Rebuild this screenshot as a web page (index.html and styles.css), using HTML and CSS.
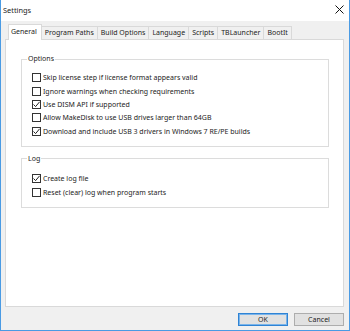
FILE: index.html
```html
<!DOCTYPE html>
<html>
    <head>
        <meta name="viewport" content="width=device-width, initial-scale=1" />
        <title>Settings</title>
        <link rel="stylesheet" href="styles.css">
    </head>
<body>

    <div class="window">
        <div class="title_bar">
            <span class="title_text">Settings</span>
            <svg class="close_icon" width="9" height="9" viewBox="0 0 9 9">
                <path d="M0.5 0.5 L8.5 8.5 M8.5 0.5 L0.5 8.5" stroke="#111" stroke-width="1" fill="none"/>
            </svg>
        </div>

        <div class="window_body">
            <div class="tabs">
                <div class="tab tab--active">General</div>
                <div class="tab">Program Paths</div>
                <div class="tab">Build Options</div>
                <div class="tab">Language</div>
                <div class="tab">Scripts</div>
                <div class="tab">TBLauncher</div>
                <div class="tab">BootIt</div>
            </div>

            <div class="panel">
                <fieldset class="group group--options">
                    <legend class="group_title">Options</legend>
                    <div class="check_row"><span class="check_box"></span>Skip license step if license format appears valid</div>
                    <div class="check_row"><span class="check_box"></span>Ignore warnings when checking requirements</div>
                    <div class="check_row"><span class="check_box is-checked"><svg viewBox="0 0 9 9" width="9" height="9"><path d="M1.5 4.5 L3.6 6.6 L7.6 1.8" stroke="#222" stroke-width="1" fill="none"/></svg></span>Use DISM API if supported</div>
                    <div class="check_row"><span class="check_box"></span>Allow MakeDisk to use USB drives larger than 64GB</div>
                    <div class="check_row"><span class="check_box is-checked"><svg viewBox="0 0 9 9" width="9" height="9"><path d="M1.5 4.5 L3.6 6.6 L7.6 1.8" stroke="#222" stroke-width="1" fill="none"/></svg></span>Download and include USB 3 drivers in Windows 7 RE/PE builds</div>
                </fieldset>

                <fieldset class="group group--log">
                    <legend class="group_title">Log</legend>
                    <div class="check_row"><span class="check_box is-checked"><svg viewBox="0 0 9 9" width="9" height="9"><path d="M1.5 4.5 L3.6 6.6 L7.6 1.8" stroke="#222" stroke-width="1" fill="none"/></svg></span>Create log file</div>
                    <div class="check_row"><span class="check_box"></span>Reset (clear) log when program starts</div>
                </fieldset>
            </div>

            <div class="button_row">
                <button class="win_button win_button--default">OK</button>
                <button class="win_button">Cancel</button>
            </div>
        </div>
    </div>

</body>
</html>
```

FILE: styles.css
```css
html, body {
    margin: 0;
    padding: 0;
}

body {
    font-family: 'Noto Sans', sans-serif;
    font-size: 7px;
    color: #1c1c1c;
    background-color: white;
}

.window {
    width: 350px;
    height: 331px;
    box-sizing: border-box;
    border: 1px solid #4a9be4;
    border-top: none;
    display: flex;
    flex-direction: column;
    background-color: #f0f0f0;
}

.title_bar {
    height: 19px;
    flex: none;
    background-color: white;
    display: flex;
    align-items: center;
    justify-content: space-between;
    padding: 0 5px 2px 2px;
}

.title_text {
    font-size: 7.4px;
}

.close_icon {
    display: block;
}

.window_body {
    flex: 1;
    display: flex;
    flex-direction: column;
    padding: 3px 5px 0 4px;
}

.tabs {
    display: flex;
    align-items: flex-end;
    height: 15px;
    flex: none;
    padding-left: 3px;
    position: relative;
    z-index: 1;
}

.tab {
    height: 12px;
    line-height: 12px;
    padding: 0 3px;
    border: 1px solid #d9d9d9;
    border-bottom: none;
    border-left: none;
    background-color: #f0f0f0;
    white-space: nowrap;
}

.tab--active {
    height: 15px;
    line-height: 13px;
    background-color: white;
    border-left: 1px solid #d9d9d9;
    padding: 0 4px 0 2px;
    margin-bottom: -1px;
}

.panel {
    height: 268px;
    flex: none;
    box-sizing: border-box;
    background-color: white;
    border: 1px solid #d9d9d9;
    padding: 14px 14px 0 15px;
}

.group {
    margin: 0;
    padding: 7px 0 8px 10px;
    border: 1px solid #dcdcdc;
    min-width: 0;
}

.group--log {
    margin-top: 7px;
    padding-top: 8px;
}

.group_title {
    padding: 0 1px;
    margin-left: -5px;
    line-height: 10px;
}

.check_row {
    display: flex;
    align-items: center;
    height: 13.4px;
    white-space: nowrap;
}

.check_box {
    width: 9px;
    height: 9px;
    box-sizing: border-box;
    border: 1px solid #333;
    background-color: white;
    margin-right: 2px;
    flex: none;
}

.check_box svg {
    display: block;
    margin: -1px 0 0 -1px;
}

.button_row {
    display: flex;
    justify-content: flex-end;
    gap: 6px;
    padding: 6px 0 0 0;
}

.win_button {
    width: 50px;
    height: 13px;
    padding: 0;
    font-family: 'Noto Sans', sans-serif;
    font-size: 7px;
    color: #1c1c1c;
    background-color: #e1e1e1;
    border: 1px solid #adadad;
}

.win_button--default {
    border: 1px solid #2f83d4;
    box-shadow: inset 0 0 0 1px #7ab4ea;
}
```
